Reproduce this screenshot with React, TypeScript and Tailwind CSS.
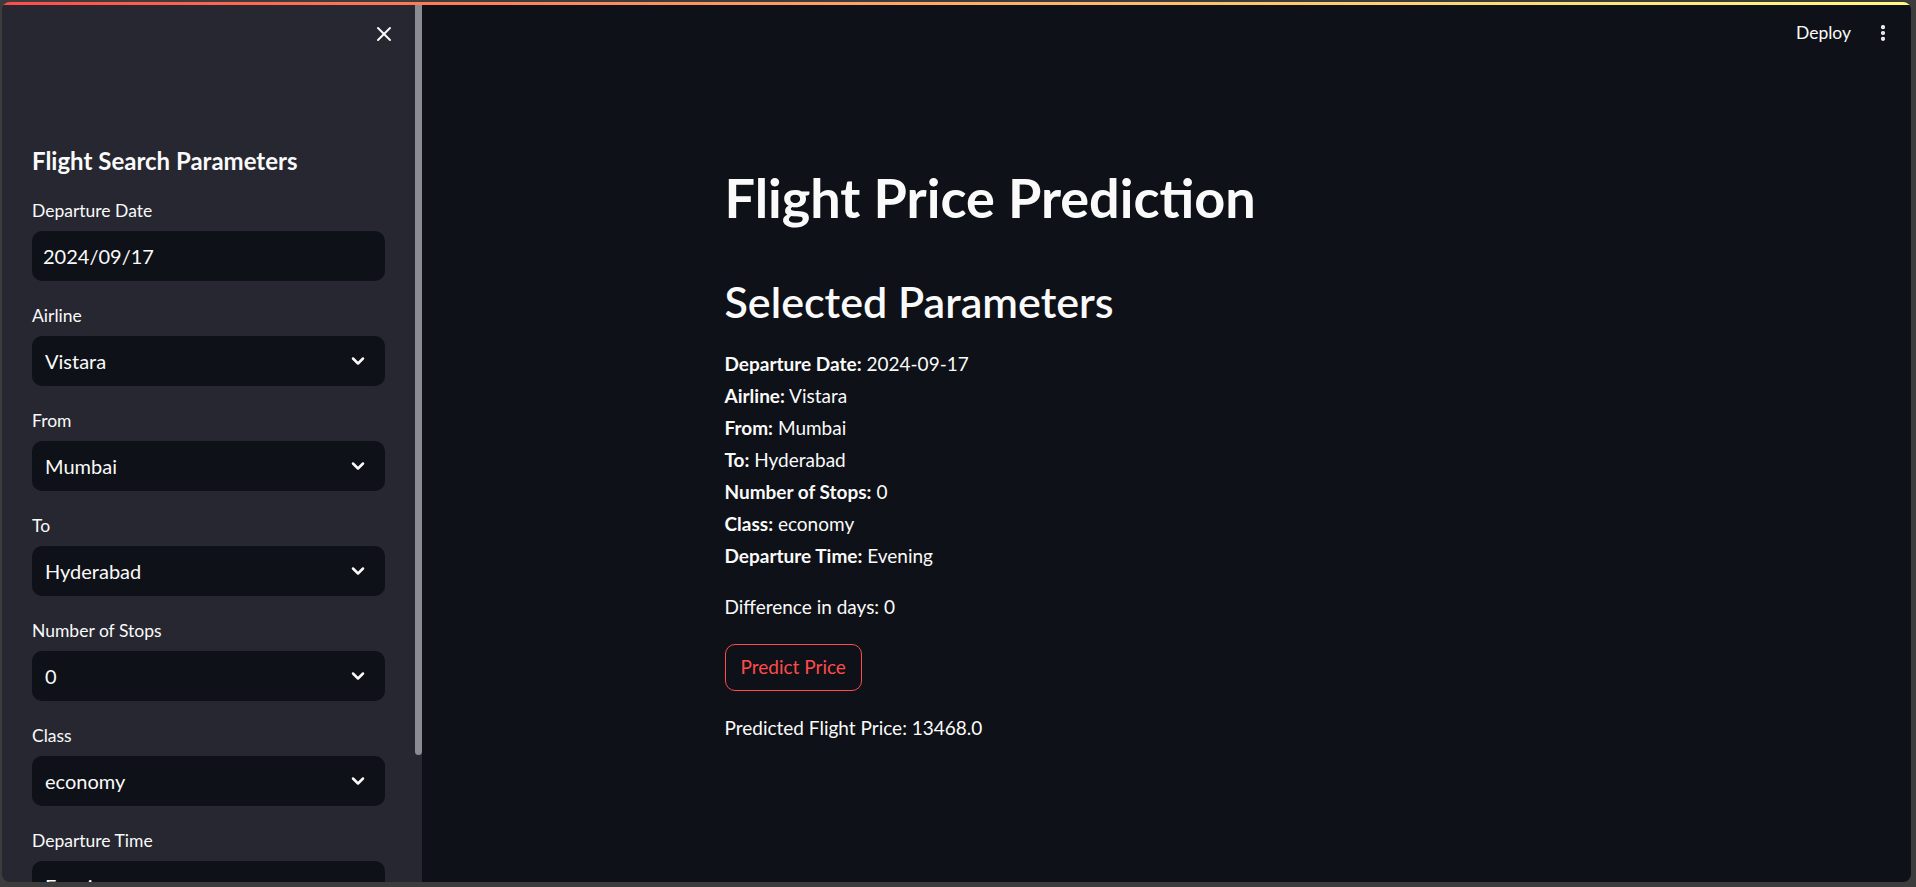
import React from 'react';
import { X, ChevronDown, EllipsisVertical } from 'lucide-react';

type Field = {
  label: string;
  value: string;
  kind: 'date' | 'select';
};

const FIELDS: Field[] = [
  { label: 'Departure Date', value: '2024/09/17', kind: 'date' },
  { label: 'Airline', value: 'Vistara', kind: 'select' },
  { label: 'From', value: 'Mumbai', kind: 'select' },
  { label: 'To', value: 'Hyderabad', kind: 'select' },
  { label: 'Number of Stops', value: '0', kind: 'select' },
  { label: 'Class', value: 'economy', kind: 'select' },
  { label: 'Departure Time', value: 'Evening', kind: 'select' },
];

const PARAMS: [string, string][] = [
  ['Departure Date:', '2024-09-17'],
  ['Airline:', 'Vistara'],
  ['From:', 'Mumbai'],
  ['To:', 'Hyderabad'],
  ['Number of Stops:', '0'],
  ['Class:', 'economy'],
  ['Departure Time:', 'Evening'],
];

const SidebarField: React.FC<{ field: Field }> = ({ field }) => {
  return (
    <div className="flex flex-col mb-[21px]">
      <label className="text-[17.5px] leading-[28px] text-[#fafafa]">{field.label}</label>
      <div className="mt-[6px] h-[50px] w-[353px] shrink-0 rounded-[10px] bg-[#0e1117] flex items-center justify-between">
        {field.kind === 'date' ? (
          <span className="pl-[11px] text-[20px] text-[#fafafa]">{field.value}</span>
        ) : (
          <>
            <span className="pl-[13px] text-[20px] text-[#fafafa]">{field.value}</span>
            <ChevronDown className="mr-[17px] w-[20px] h-[20px] text-[#fafafa]" strokeWidth={3} />
          </>
        )}
      </div>
    </div>
  );
};

export default function App() {
  return (
    <div
      className="h-[887px] w-full bg-[#3c3c3c] pt-[2px] pl-[2px] pr-[5px] pb-[5px] overflow-hidden"
      style={{ fontFamily: 'Lato, "Noto Sans", sans-serif' }}
    >
      <div className="h-full w-full rounded-[8px] overflow-hidden flex flex-col">
        {/* top decoration */}
        <div className="h-[3px] shrink-0 bg-gradient-to-r from-[#ff4b4b] to-[#fffd80]" />

        <div className="flex flex-1 min-h-0">
          {/* sidebar */}
          <aside className="relative w-[420px] shrink-0 bg-[#262730] overflow-hidden pl-[30px]">
            <div className="h-[58px] flex items-center justify-end pr-[26px]">
              <X className="w-[24px] h-[24px] text-[#fafafa]" strokeWidth={2} />
            </div>
            <h2 className="mt-[82px] text-[24px] leading-[31px] font-bold text-[#fafafa]">
              Flight Search Parameters
            </h2>
            <div className="mt-[21px] flex flex-col">
              {FIELDS.map((f) => (
                <SidebarField key={f.label} field={f} />
              ))}
            </div>
            {/* scrollbar thumb */}
            <div className="absolute right-0 top-0 w-[7px] h-[750px] rounded-b-[4px] bg-[#8b8b92]" />
          </aside>

          {/* main */}
          <main className="flex-1 bg-[#0e1117] flex flex-col text-[#fafafa]">
            <div className="h-[56px] shrink-0 flex items-center justify-end pr-[18px]">
              <span className="text-[17.5px] mr-[22px]">Deploy</span>
              <EllipsisVertical className="w-[20px] h-[20px]" strokeWidth={3} />
            </div>

            <div className="w-[920px] mx-auto px-[18px]">
              <h1 className="mt-[104px] text-[54px] leading-[66px] font-bold">Flight Price Prediction</h1>
              <h2 className="mt-[44px] text-[43px] leading-[54px] font-semibold">Selected Parameters</h2>
              <div className="mt-[19px] flex flex-col">
                {PARAMS.map(([k, v]) => (
                  <p key={k} className="text-[19px] leading-[32px]">
                    <span className="font-bold">{k}</span> {v}
                  </p>
                ))}
              </div>
              <p className="mt-[19px] text-[19px] leading-[32px]">Difference in days: 0</p>
              <button className="mt-[21px] h-[47px] px-[15px] rounded-[10px] border border-[#ff4b4b] bg-[#0e1117] text-[#ff4b4b] text-[19px]">
                Predict Price
              </button>
              <p className="mt-[21px] text-[19px] leading-[32px]">Predicted Flight Price: 13468.0</p>
            </div>
          </main>
        </div>
      </div>
    </div>
  );
}
